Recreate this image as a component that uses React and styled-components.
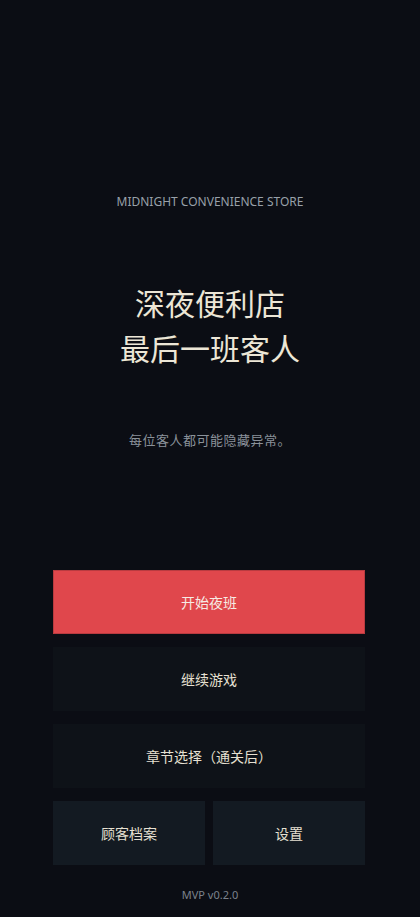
import React from "react";
import styled, { createGlobalStyle } from "styled-components";

const GlobalStyle = createGlobalStyle`
  html, body {
    margin: 0;
    padding: 0;
    background: #0b0d14;
  }
  * {
    box-sizing: border-box;
  }
`;

const Page = styled.div`
  min-height: 917px;
  width: 420px;
  background: #0b0d14;
  display: flex;
  flex-direction: column;
  align-items: center;
  padding-top: 194px;
  font-family: "Noto Sans", "Noto Sans CJK SC", sans-serif;
`;

const Tagline = styled.div`
  font-size: 12px;
  line-height: 16px;
  color: #98a0a9;
`;

const Title = styled.h1`
  margin: 70px 0 0;
  font-family: "Noto Sans CJK SC", sans-serif;
  font-weight: 400;
  font-size: 30px;
  line-height: 45px;
  color: #ece6d6;
  text-align: center;
`;

const Subtitle = styled.p`
  margin: 60px 0 0;
  font-family: "Noto Sans CJK SC", sans-serif;
  font-size: 13px;
  line-height: 20px;
  letter-spacing: 0.5px;
  color: #8a919a;
`;

const Menu = styled.div`
  margin-top: 120px;
  margin-right: 2px;
  width: 312px;
  display: grid;
  grid-template-columns: 1fr 1fr;
  gap: 13px 8px;
`;

const MenuButton = styled.button`
  grid-column: ${(p) => (p.$half ? "auto" : "1 / -1")};
  height: 64px;
  border: 1px solid ${(p) => (p.$primary ? "#b93b40" : "transparent")};
  background: ${(p) =>
    p.$primary ? "#e0474c" : p.$half ? "#131a22" : "#0e1218"};
  color: ${(p) => (p.$primary ? "#f6ebe4" : "#e6e0d2")};
  font-family: "Noto Sans CJK SC", sans-serif;
  font-size: 14px;
  cursor: pointer;
  padding: 0;
`;

const Version = styled.div`
  margin-top: 22px;
  font-size: 11px;
  line-height: 16px;
  color: #7b828c;
`;

export default function App() {
  return (
    <>
      <GlobalStyle />
      <Page>
        <Tagline>MIDNIGHT CONVENIENCE STORE</Tagline>
        <Title>
          深夜便利店
          <br />
          最后一班客人
        </Title>
        <Subtitle>每位客人都可能隐藏异常。</Subtitle>
        <Menu>
          <MenuButton $primary>开始夜班</MenuButton>
          <MenuButton>继续游戏</MenuButton>
          <MenuButton>章节选择（通关后）</MenuButton>
          <MenuButton $half>顾客档案</MenuButton>
          <MenuButton $half>设置</MenuButton>
        </Menu>
        <Version>MVP v0.2.0</Version>
      </Page>
    </>
  );
}
